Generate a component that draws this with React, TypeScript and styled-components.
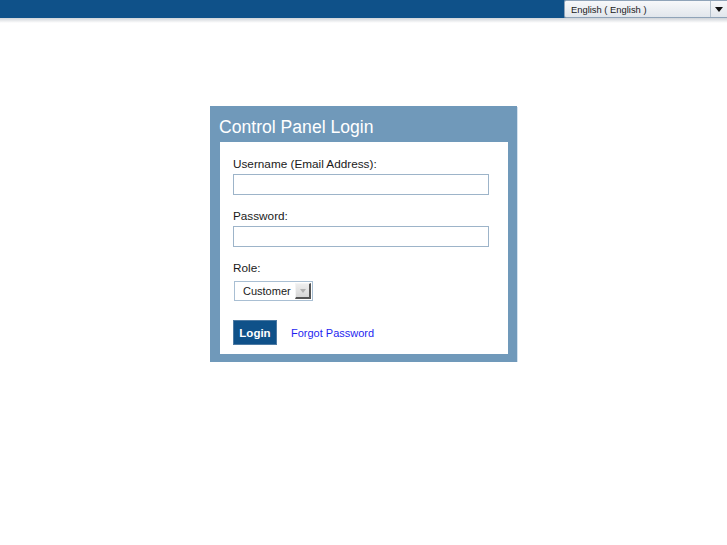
import React, { useState } from 'react';
import styled, { createGlobalStyle } from 'styled-components';

const GlobalStyle = createGlobalStyle`
  html, body {
    margin: 0;
    padding: 0;
    background: #ffffff;
    font-family: "Liberation Sans", Arial, sans-serif;
  }
`;

const TopBar = styled.div`
  height: 18px;
  background-color: #0f5189;
  display: flex;
  justify-content: flex-end;
  align-items: stretch;
  position: relative;

  &::after {
    content: '';
    position: absolute;
    left: 0;
    right: 0;
    top: 18px;
    height: 5px;
    background: linear-gradient(#cfd3d8, #ffffff);
  }
`;

const LangSelect = styled.div`
  width: 163px;
  box-sizing: border-box;
  display: flex;
  align-items: stretch;
  background: linear-gradient(#f7f8fa, #e1e6ec);
  border: 1px solid #8fa3b8;
  border-right: none;
  border-radius: 2px 0 0 2px;
  font-size: 9.4px;
  color: #1a1a1a;
  cursor: pointer;
`;

const LangText = styled.span`
  flex: 1;
  padding-left: 6px;
  line-height: 18px;
`;

const LangArrow = styled.span`
  width: 16px;
  border-left: 1px solid #b4c0cc;
  display: flex;
  align-items: center;
  justify-content: center;

  &::before {
    content: '';
    border-left: 4px solid transparent;
    border-right: 4px solid transparent;
    border-top: 5px solid #111;
  }
`;

const Page = styled.div`
  display: flex;
  justify-content: center;
  padding-top: 88px;
`;

const Panel = styled.div`
  width: 307px;
  box-sizing: border-box;
  background-color: #7099ba;
  padding: 0 9px 8px 10px;
  box-shadow: 1px 1px 0 #d3e1ee;
`;

const PanelTitle = styled.h1`
  margin: 0;
  padding: 10px 0 0 0;
  margin-left: -1px;
  height: 36px;
  box-sizing: border-box;
  font-size: 17.6px;
  line-height: 22px;
  font-weight: normal;
  color: #ffffff;
`;

const PanelBody = styled.form`
  background-color: #ffffff;
  padding: 15px 19px 9px 13px;
  display: flex;
  flex-direction: column;
`;

const Field = styled.div<{ $gap?: number }>`
  display: flex;
  flex-direction: column;
  align-items: flex-start;
  gap: ${p => p.$gap ?? 3}px;
  margin-bottom: 14px;
`;

const Label = styled.label`
  font-size: 11.75px;
  line-height: 14px;
  color: #1a1a1a;
`;

const TextInput = styled.input`
  width: 256px;
  height: 21px;
  box-sizing: border-box;
  border: 1px solid #9db4c9;
  padding: 0 4px;
  margin: 0;
  font-family: inherit;
  font-size: 12px;
  background: #ffffff;

  &:focus {
    outline: none;
    border-color: #0f5189;
  }
`;

const RoleSelect = styled.div`
  margin-left: 1px;
  width: 79px;
  height: 20px;
  box-sizing: border-box;
  border: 1px solid #a9bfd3;
  display: flex;
  align-items: center;
  background: #ffffff;
  cursor: pointer;
`;

const RoleText = styled.span`
  flex: 1;
  padding-left: 8px;
  font-size: 11px;
  color: #1a1a1a;
`;

const RoleButton = styled.span`
  width: 16px;
  height: 16px;
  margin-right: 1px;
  box-sizing: border-box;
  background: linear-gradient(#eeeeee, #d6d6d6);
  border-top: 1px solid #f4f4f4;
  border-left: 1px solid #f4f4f4;
  border-right: 2px solid #555;
  border-bottom: 2px solid #555;
  display: flex;
  align-items: center;
  justify-content: center;

  &::before {
    content: '';
    border-left: 3px solid transparent;
    border-right: 3px solid transparent;
    border-top: 4px solid #b0b0b0;
  }
`;

const Actions = styled.div`
  display: flex;
  align-items: center;
  gap: 14px;
  margin-top: 5px;
`;

const LoginButton = styled.button`
  width: 44px;
  height: 25px;
  box-sizing: border-box;
  background-color: #0f5189;
  border: 1px solid #4d7aa3;
  color: #ffffff;
  font-family: inherit;
  font-size: 11.5px;
  font-weight: bold;
  padding: 0;
  cursor: pointer;
`;

const ForgotLink = styled.a`
  font-size: 11px;
  color: #1f1ff0;
  text-decoration: none;
  cursor: pointer;
`;

export default function App() {
  const [username, setUsername] = useState('');
  const [password, setPassword] = useState('');

  return (
    <>
      <GlobalStyle />
      <TopBar>
        <LangSelect>
          <LangText>English ( English )</LangText>
          <LangArrow />
        </LangSelect>
      </TopBar>
      <Page>
        <Panel>
          <PanelTitle>Control Panel Login</PanelTitle>
          <PanelBody onSubmit={e => e.preventDefault()}>
            <Field>
              <Label htmlFor="username">Username (Email Address):</Label>
              <TextInput
                id="username"
                type="text"
                value={username}
                onChange={e => setUsername(e.target.value)}
              />
            </Field>
            <Field>
              <Label htmlFor="password">Password:</Label>
              <TextInput
                id="password"
                type="password"
                value={password}
                onChange={e => setPassword(e.target.value)}
              />
            </Field>
            <Field $gap={6}>
              <Label>Role:</Label>
              <RoleSelect>
                <RoleText>Customer</RoleText>
                <RoleButton />
              </RoleSelect>
            </Field>
            <Actions>
              <LoginButton type="submit">Login</LoginButton>
              <ForgotLink>Forgot Password</ForgotLink>
            </Actions>
          </PanelBody>
        </Panel>
      </Page>
    </>
  );
}
